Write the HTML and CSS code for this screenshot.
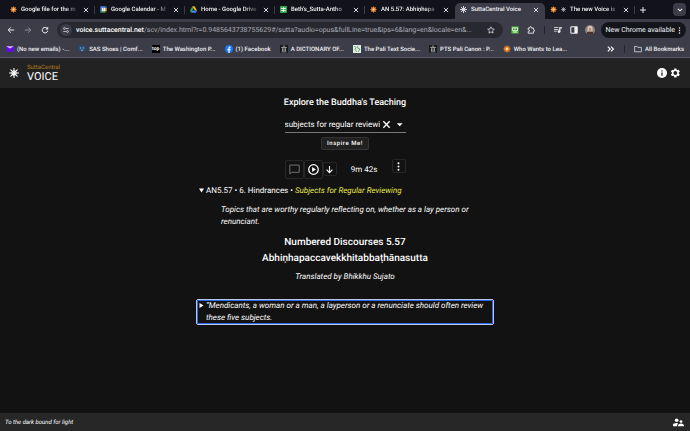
FILE: index.html
```html
<!DOCTYPE html>
<html lang="en">
<head>
<meta charset="utf-8">
<title>SuttaCentral Voice</title>
<link rel="stylesheet" href="styles.css">
</head>
<body>
<svg class="defs" aria-hidden="true">
  <symbol id="wheel" viewBox="0 0 20 20"><g stroke="currentColor" stroke-width="2.2" stroke-linecap="round"><path d="M10 1v18M1 10h18M3.6 3.6l12.8 12.8M16.4 3.6L3.6 16.4"/></g><circle cx="10" cy="10" r="4.6" fill="none" stroke="currentColor" stroke-width="1.6"/></symbol>
  <symbol id="sun" viewBox="0 0 20 20"><path d="M10 0l2.400 4.200L17 3l-1.200 4.600L20 10l-4.200 2.400L17 17l-4.600-1.200L10 20l-2.400-4.200L3 17l1.200-4.600L0 10l4.200-2.400L3 3l4.600 1.200z" fill="#f08322"/><circle cx="10" cy="10" r="3" fill="#ffe2b0"/></symbol>
  <symbol id="close" viewBox="0 0 10 10"><path d="M1.500 1.500l7 7M8.500 1.500l-7 7" stroke="currentColor" stroke-width="1.500"/></symbol>
  <symbol id="calendar" viewBox="0 0 20 20"><path fill="#4285f4" d="M1 1h14v4H5v11H1z"/><path fill="#1967d2" d="M15 1h4v4h-4z"/><path fill="#fbbc04" d="M15 5h4v10h-4z"/><path fill="#34a853" d="M5 15h10v4H1v-4z"/><path fill="#fff" d="M5 5h10v10H5z"/><path fill="#ea4335" d="M15 15h4l-4 4z"/><path d="M8 7h3l-1.500 2.500q2 0 1.500 2T8 13" fill="none" stroke="#4285f4" stroke-width="1.300"/></symbol>
  <symbol id="drive" viewBox="0 0 20 18"><path fill="#34a853" d="M7 0L0 12l3 6 7-12z"/><path fill="#fbbc04" d="M7 0h6l7 12h-6z"/><path fill="#4285f4" d="M6.500 12H20l-3 6H3z"/></symbol>
  <symbol id="sheet" viewBox="0 0 20 20"><rect width="20" height="20" rx="2" fill="#2fa84f"/><path d="M3 7h14M3 13h14M10 3v14" stroke="#fff" stroke-width="2.500"/></symbol>
  <symbol id="arrow" viewBox="0 0 20 20"><path d="M18 10H3M9.500 3.500L3 10l6.500 6.500" fill="none" stroke="currentColor" stroke-width="2.400"/></symbol>
  <symbol id="reload" viewBox="0 0 20 20"><path d="M16 6.500A7 7 0 1 0 17 12" fill="none" stroke="currentColor" stroke-width="2.500"/><path d="M18 2v7h-7z" fill="currentColor"/></symbol>
  <symbol id="tune" viewBox="0 0 20 20"><g fill="none" stroke="currentColor" stroke-width="2.200"><path d="M10 5h9M1 15h9"/><circle cx="5" cy="5" r="3"/><circle cx="15" cy="15" r="3"/></g></symbol>
  <symbol id="star" viewBox="0 0 20 20"><path d="M10 2l2.400 5.400 5.900.6-4.400 3.900 1.300 5.800L10 14.700l-5.200 3 1.300-5.800L1.700 8l5.900-.6z" fill="none" stroke="currentColor" stroke-width="1.700"/></symbol>
  <symbol id="robot" viewBox="0 0 20 20"><path fill="#52b445" d="M1 1h18v18H1z"/><path fill="#e9ffe5" d="M3 4h14v8H3zM5 14h10v2H5z"/><path fill="#2f7d27" d="M5 6h4v4H5zM11 6h4v4h-4z"/></symbol>
  <symbol id="puzzle" viewBox="0 0 20 20"><path d="M3 5h4V3.500a2 2 0 0 1 4 0V5h5v4.500h1a2 2 0 0 1 0 4h-1V18H3v-4h1a2 2 0 0 0 0-4.500H3z" fill="none" stroke="currentColor" stroke-width="2.200"/></symbol>
  <symbol id="queue" viewBox="0 0 20 20"><path fill="currentColor" d="M0 3h11v2H0zM0 7.500h11v2H0zM0 12h7v2H0zM13 3h7v3h-4v8h-3z"/><circle cx="12.500" cy="14" r="3.500" fill="currentColor"/></symbol>
  <symbol id="panel" viewBox="0 0 20 20"><path d="M2 2h16v16H2z" fill="none" stroke="currentColor" stroke-width="2.500"/><path d="M11 2h7v16h-7z" fill="currentColor"/></symbol>
  <symbol id="dots" viewBox="0 0 20 20"><g fill="currentColor"><circle cx="10" cy="3" r="2.200"/><circle cx="10" cy="10" r="2.200"/><circle cx="10" cy="17" r="2.200"/></g></symbol>
  <symbol id="mail" viewBox="0 0 20 20"><rect y="3" width="20" height="14" rx="2" fill="#5f10df"/><path d="M1 4l9 5 9-5-1-1H2z" fill="#d8c4ff"/></symbol>
  <symbol id="shield" viewBox="0 0 20 20"><path d="M2 2h16v10l-8 7-8-7z" fill="#24507c"/><path d="M5 6h3v3H5zM12 6h3v3h-3zM7 12h6v2H7z" fill="#9fc0de"/></symbol>
  <symbol id="facebook" viewBox="0 0 20 20"><circle cx="10" cy="10" r="10" fill="#1877f2"/><path d="M8.500 20v-7H6v-3h2.500V8q0-4 3.500-4h2v3h-1.500q-1 0-1 1.500V10H14l-.5 3h-2v7z" fill="#fff"/></symbol>
  <symbol id="archive" viewBox="0 0 20 20"><rect width="20" height="20" rx="2" fill="#17181a"/><path d="M3 5h14v2H3zM4 16h12v2H4zM5 8h2v7H5zM9 8h2v7H9zM13 8h2v7h-2zM7 2h6v2H7z" fill="#bfc0c2"/></symbol>
  <symbol id="pali" viewBox="0 0 20 20"><path fill="#e5eee5" d="M0 0h20v20H0z"/><path d="M3 3l5 3-3 5 4 6M12 2v6l5 2-4 7" fill="none" stroke="#3b8f53" stroke-width="2"/></symbol>
  <symbol id="folder" viewBox="0 0 20 20"><path d="M1.500 3.500h6l2 2.500h9v11h-17z" fill="none" stroke="currentColor" stroke-width="1.700"/></symbol>
  <symbol id="info" viewBox="0 0 20 20"><circle cx="10" cy="10" r="10" fill="#fff"/><path d="M8.700 9h2.600v6.500H8.700zM8.700 4.500h2.600V7H8.700z" fill="#222"/></symbol>
  <symbol id="gear" viewBox="0 0 24 24"><path fill="currentColor" fill-rule="evenodd" d="M19.400 13a7.800 7.800 0 0 0 0-2l2.200-1.700-2.100-3.600-2.600 1-1.700-1L14.800 3h-4.200l-.4 2.700-1.700 1-2.600-1-2.100 3.600L6 11a7.800 7.800 0 0 0 0 2l-2.200 1.700 2.100 3.600 2.600-1 1.700 1 .4 2.700h4.200l.4-2.700 1.700-1 2.600 1 2.100-3.600zM12.700 15.800a3.800 3.800 0 1 1 0-7.600 3.800 3.800 0 0 1 0 7.600z"/></symbol>
  <symbol id="comment" viewBox="0 0 20 20"><path d="M1.500 2h17v13H5l-3.500 3z" fill="none" stroke="currentColor" stroke-width="1.700"/></symbol>
  <symbol id="play" viewBox="0 0 20 20"><circle cx="10" cy="10" r="8.700" fill="none" stroke="currentColor" stroke-width="2.300"/><path d="M7.500 5.500v9l7-4.500z" fill="currentColor"/></symbol>
  <symbol id="people" viewBox="0 0 24 24"><g fill="currentColor"><circle cx="8" cy="7" r="4"/><path d="M0 20v-3q0-4 8-4 2 0 3 .4-2 2-2 6.600z"/><circle cx="17.500" cy="10" r="3"/><path d="M11 20v-2q1-4 6.500-4t6.500 4v2z"/></g></symbol>
</svg>

<header class="browser">
  <nav class="tabs" aria-label="Open tabs">
    <div class="tab"><svg class="ico"><use href="#sun"/></svg><span class="tab-name">Google file for the m</span><button class="x" aria-label="Close tab"><svg><use href="#close"/></svg></button></div>
    <div class="tab"><svg class="ico"><use href="#calendar"/></svg><span class="tab-name">Google Calendar - M</span><button class="x" aria-label="Close tab"><svg><use href="#close"/></svg></button></div>
    <div class="tab"><svg class="ico"><use href="#drive"/></svg><span class="tab-name">Home - Google Drive</span><button class="x" aria-label="Close tab"><svg><use href="#close"/></svg></button></div>
    <div class="tab"><svg class="ico"><use href="#sheet"/></svg><span class="tab-name">Beth's_Sutta-Antho</span><button class="x" aria-label="Close tab"><svg><use href="#close"/></svg></button></div>
    <div class="tab plain"><svg class="ico"><use href="#sun"/></svg><span class="tab-name">AN 5.57: Abhiṇhapa</span><button class="x" aria-label="Close tab"><svg><use href="#close"/></svg></button></div>
    <div class="tab plain active"><svg class="ico"><use href="#wheel"/></svg><span class="tab-name">SuttaCentral Voice</span><button class="x" aria-label="Close tab"><svg><use href="#close"/></svg></button></div>
    <div class="tab"><svg class="ico"><use href="#sun"/></svg><svg class="ico mini"><use href="#wheel"/></svg><span class="tab-name">The new Voice is</span><button class="x" aria-label="Close tab"><svg><use href="#close"/></svg></button></div>
    <button class="new-tab" aria-label="New tab"><svg viewBox="0 0 10 10"><path d="M5 0v10M0 5h10" stroke="currentColor" stroke-width="1.600"/></svg></button>
    <button class="tab-search" aria-label="Search tabs"><svg viewBox="0 0 10 10"><path d="M1.500 3L5 6.500 8.500 3" fill="none" stroke="currentColor" stroke-width="1.700"/></svg></button>
  </nav>
  <div class="toolbar">
    <button class="tool" aria-label="Back"><svg><use href="#arrow"/></svg></button>
    <button class="tool forward" aria-label="Forward"><svg><use href="#arrow"/></svg></button>
    <button class="tool" aria-label="Reload"><svg><use href="#reload"/></svg></button>
    <div class="address">
      <button class="site" aria-label="Site information"><svg><use href="#tune"/></svg></button>
      <span class="url"><b>voice.suttacentral.net</b>/scv/index.html?r=0.9485643738755629#/sutta?audio=opus&amp;fullLine=true&amp;ips=6&amp;lang=en&amp;locale=en&amp;...</span>
      <button class="tool" aria-label="Bookmark"><svg><use href="#star"/></svg></button>
    </div>
    <div class="extras">
      <button class="tool" aria-label="Assistant"><svg><use href="#robot"/></svg></button>
      <button class="tool" aria-label="Extensions"><svg><use href="#puzzle"/></svg></button>
      <i class="rule"></i>
      <button class="tool" aria-label="Media"><svg><use href="#queue"/></svg></button>
      <button class="tool" aria-label="Side panel"><svg><use href="#panel"/></svg></button>
      <button class="avatar" aria-label="Profile"><svg viewBox="0 0 20 20"><circle cx="10" cy="10" r="10" fill="#8e8178"/><path d="M3 17q1-5 7-5t7 5q-7 6-14 0" fill="#4b3030"/><path d="M5 8q0-6 5-6t5 6v5H5z" fill="#d8d2cb"/><ellipse cx="10" cy="9" rx="3" ry="4" fill="#c28e74"/></svg></button>
      <button class="update">New Chrome available<svg><use href="#dots"/></svg></button>
    </div>
  </div>
  <nav class="bookmarks" aria-label="Bookmarks">
    <a href="#"><svg class="ico"><use href="#mail"/></svg><span>(No new emails) -...</span></a>
    <a href="#"><svg class="ico"><use href="#shield"/></svg><span>SAS Shoes | Comf...</span></a>
    <a href="#"><i class="top">top</i><span>The Washington P...</span></a>
    <a href="#"><svg class="ico"><use href="#facebook"/></svg><span>(1) Facebook</span></a>
    <a href="#"><svg class="ico"><use href="#archive"/></svg><span>A DICTIONARY OF...</span></a>
    <a href="#"><svg class="ico"><use href="#pali"/></svg><span>The Pali Text Socie...</span></a>
    <a href="#"><svg class="ico"><use href="#archive"/></svg><span>PTS Pali Canon : P...</span></a>
    <a href="#"><svg class="ico"><use href="#sun"/></svg><span>Who Wants to Lea...</span></a>
    <button class="more" aria-label="More bookmarks"><svg viewBox="0 0 10 10"><path d="M1 2l3 3-3 3M5 2l3 3-3 3" fill="none" stroke="currentColor" stroke-width="1.500"/></svg></button>
    <i class="rule"></i>
    <a href="#"><svg class="ico"><use href="#folder"/></svg><span>All Bookmarks</span></a>
  </nav>
</header>

<header class="app-bar">
  <a href="#" class="brand"><svg><use href="#wheel"/></svg><span class="brand-text"><small>SuttaCentral</small><strong>VOICE</strong></span></a>
  <div class="app-actions">
    <button aria-label="Information"><svg><use href="#info"/></svg></button>
    <button aria-label="Settings"><svg class="cog"><use href="#gear"/></svg></button>
  </div>
</header>

<main>
  <section class="search">
    <h1><label for="search">Explore the Buddha's Teaching</label></h1>
    <div class="field">
      <input id="search" type="text" value="subjects for regular reviewing">
      <button aria-label="Clear"><svg><use href="#close"/></svg></button>
      <button aria-label="Show suggestions"><svg viewBox="0 0 10 10"><path d="M2 3.500h6.500L5.200 7z" fill="currentColor"/></svg></button>
    </div>
    <button class="inspire">Inspire Me!</button>
  </section>
  <div class="player">
    <button class="dim" aria-label="Comment"><svg><use href="#comment"/></svg></button>
    <button aria-label="Play"><svg><use href="#play"/></svg></button>
    <button class="small down" aria-label="Download"><svg><use href="#arrow"/></svg></button>
    <span class="time">9m 42s</span>
    <button class="small menu" aria-label="More"><svg><use href="#dots"/></svg></button>
  </div>
  <details class="sutta" open>
    <summary><svg viewBox="0 0 10 10"><path d="M0 1h10L5 9z" fill="currentColor"/></svg><span>AN5.57 • 6. Hindrances • <em>Subjects for Regular Reviewing</em></span></summary>
    <p class="blurb">Topics that are worthy regularly reflecting on, whether as a lay person or renunciant.</p>
    <h2>Numbered Discourses 5.57</h2>
    <h2>Abhiṇhapaccavekkhitabbaṭhānasutta</h2>
    <p class="credit">Translated by Bhikkhu Sujato</p>
    <details class="segment">
      <summary><svg viewBox="0 0 10 10"><path d="M1 0v10l8-5z" fill="currentColor"/></svg><span>“Mendicants, a woman or a man, a layperson or a renunciate should often review these five subjects.</span></summary>
    </details>
  </details>
</main>

<footer class="status"><em>To the dark bound for light</em><button aria-label="Community"><svg><use href="#people"/></svg></button></footer>
</body>
</html>
```
FILE: styles.css
```css
* { box-sizing: border-box; }
body {
  margin: 0;
  min-height: 100vh;
  display: flex;
  flex-direction: column;
  background: #121212;
  color: #fff;
  font-family: Roboto, "Noto Sans", sans-serif;
  font-size: 8px;
  text-rendering: geometricPrecision;
}
button {
  display: flex;
  align-items: center;
  justify-content: center;
  flex: none;
  padding: 0;
  border: 0;
  background: none;
  color: inherit;
  font: inherit;
  text-rendering: inherit;
}
a { color: inherit; text-decoration: none; }
svg { display: block; flex: none; width: 8px; height: 8px; }
.defs { position: absolute; width: 0; height: 0; }
.rule { width: 1px; height: 8px; background: #24252c; flex: none; }

.browser {
  background: #3c3d49;
  color: #f2f2f5;
  font-size: 6px;
  font-weight: 500;
  border-bottom: 1px solid #5a5b65;
}
.tabs {
  display: flex;
  height: 19px;
  padding: 3px 4px 0 5px;
  background: #12131a;
}
.tab {
  position: relative;
  display: flex;
  align-items: center;
  flex: 0 1 90px;
  min-width: 0;
  padding: 0 6px 3px 5px;
  gap: 4px;
}
.tab::after {
  content: "";
  position: absolute;
  right: 0;
  top: 3px;
  width: 1px;
  height: 8px;
  background: #3c3d49;
}
.tab.plain::after { display: none; }
.tab.active {
  border-radius: 5px 5px 0 0;
  background: #3c3d49;
}
.tab .ico { width: 7px; height: 7px; }
.tab .mini { width: 5px; height: 5px; color: #c8c8cc; }
.tab-name {
  flex: 1;
  white-space: nowrap;
  mask-image: linear-gradient(to right, #000 75%, transparent);
}
.active .tab-name { mask-image: none; }
.x svg { width: 6px; height: 6px; }
.new-tab { width: 15px; height: 13px; }
.new-tab svg { width: 6px; height: 6px; }
.tab-search {
  width: 13px;
  height: 13px;
  margin-left: auto;
  border-radius: 4px;
  background: #3c3d49;
}
.tab-search svg { width: 6px; height: 6px; }

.toolbar {
  display: flex;
  align-items: center;
  height: 22px;
  padding: 0 4px 0 6px;
  gap: 7px;
}
.tool { width: 10px; height: 10px; }
.forward { color: #90919b; }
.forward svg { transform: rotate(180deg); }
.address {
  display: flex;
  align-items: center;
  flex: 1;
  min-width: 0;
  height: 16px;
  padding: 0 7px 0 3px;
  gap: 4px;
  border-radius: 8px;
  background: #282930;
}
.site { width: 12px; height: 12px; border-radius: 50%; background: #3c3d49; }
.site svg { width: 6px; height: 6px; }
.url {
  flex: 1;
  white-space: nowrap;
  color: #a9aab3;
  font-size: 7px;
  font-weight: 400;
}
.url b { color: #fff; font-weight: 500; }
.extras { display: flex; align-items: center; gap: 6px; }
.extras .rule { margin: 0 2px; }
.avatar svg { width: 10px; height: 10px; }
.update {
  height: 16px;
  padding: 0 3px 0 5px;
  gap: 1px;
  border-radius: 8px;
  background: #14151b;
  font-size: 7px;
  font-weight: 400;
}
.update svg { width: 7px; height: 7px; }

.bookmarks {
  display: flex;
  align-items: center;
  height: 16px;
  padding: 0 6px;
  gap: 9px;
}
.bookmarks a {
  display: flex;
  align-items: center;
  flex: none;
  gap: 3px;
  white-space: nowrap;
}
.bookmarks .more { margin-left: auto; }
.top {
  width: 8px;
  height: 8px;
  background: #000;
  color: #fff;
  font-size: 5px;
  font-weight: 700;
  font-style: normal;
  line-height: 8px;
  text-align: center;
}

.app-bar {
  display: flex;
  align-items: center;
  justify-content: space-between;
  height: 30px;
  padding: 0 9px;
  background: #222;
}
.brand { display: flex; align-items: center; gap: 8px; }
.brand svg { width: 10px; height: 10px; }
.brand-text { display: flex; flex-direction: column; }
.brand small { color: #b17a1e; font-size: 6px; line-height: 7px; }
.brand strong { font-size: 11px; font-weight: 400; line-height: 12px; }
.app-actions { display: flex; align-items: center; gap: 2px; }
.app-actions svg { width: 10px; height: 10px; }
.app-actions .cog { width: 12px; height: 12px; }

main {
  flex: 1;
  width: 298px;
  max-width: 100%;
  margin: 0 auto;
  padding-top: 9px;
}
.search {
  display: flex;
  flex-direction: column;
  align-items: center;
}
h1, h2 { margin: 0; font-weight: 500; text-align: center; }
h1 { font-size: 9px; line-height: 12px; }
.field {
  display: flex;
  align-items: center;
  width: 121px;
  height: 16px;
  margin-top: 8px;
  border-bottom: 1px solid #777;
}
.field input {
  flex: 1;
  min-width: 0;
  padding: 0;
  border: 0;
  outline: 0;
  background: none;
  color: inherit;
  font: inherit;
  text-rendering: inherit;
}
.field button { width: 13px; height: 13px; }
.field svg { width: 9px; height: 9px; }
.inspire {
  width: 48px;
  height: 13px;
  margin-top: 4px;
  border: 1px solid #333;
  border-radius: 2px;
  background: #212121;
  font-size: 6px;
  font-weight: 500;
  letter-spacing: 0.09em;
}
.player {
  display: flex;
  align-items: center;
  width: 121px;
  height: 20px;
  margin: 9px auto 0;
}
.player button {
  width: 19px;
  height: 19px;
  border: 1px solid #262626;
  border-radius: 2px;
}
.player svg { width: 11px; height: 11px; }
.player .small { width: 14px; height: 14px; }
.player .small svg { width: 9px; height: 9px; }
.player .dim { color: #777; }
.player .down svg { transform: rotate(-90deg); }
.player .menu { align-self: flex-start; }
.time { flex: 1; text-align: center; }

summary { display: flex; list-style: none; line-height: 12px; }
summary svg { width: 5px; height: 5px; margin: 3px 2px 0 0; }
.sutta { margin-top: 6px; }
.sutta > summary { padding-left: 3px; }
.sutta em { color: #e5e54a; }
.blurb { margin: 7px 25px 0; font-style: italic; line-height: 12px; }
h2 { font-size: 10px; line-height: 16px; }
.blurb + h2 { margin-top: 7px; }
.credit { margin: 4px 0 0; text-align: center; font-style: italic; line-height: 12px; }
.segment {
  margin-top: 16px;
  border: 1px solid #b4c8f4;
  border-radius: 2px;
  outline: 1px solid #2f68df;
  outline-offset: -2px;
  font-style: italic;
}
.segment summary { padding: 0 6px 0 2px; }

.status {
  display: flex;
  align-items: center;
  justify-content: space-between;
  height: 18px;
  padding: 0 6px 0 5px;
  background: #272727;
  font-size: 6px;
}
.status svg { width: 11px; height: 11px; }
```
